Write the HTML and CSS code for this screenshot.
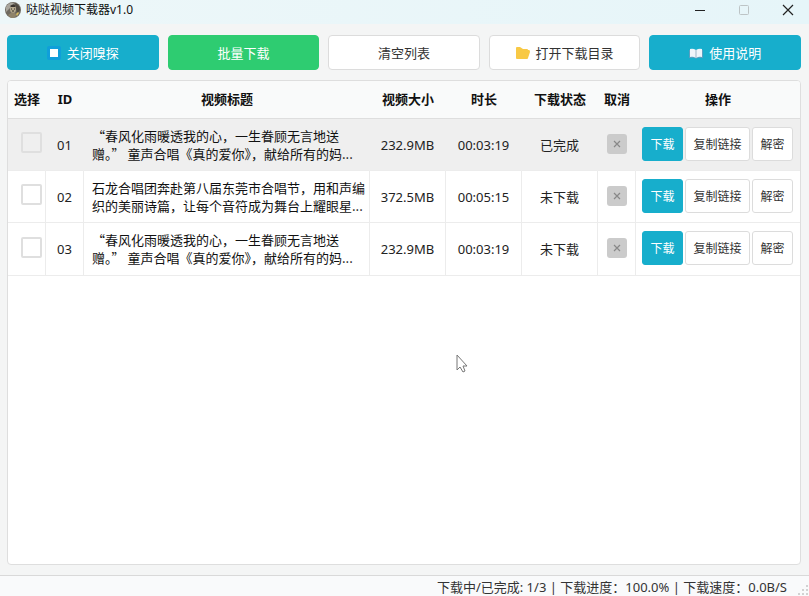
FILE: index.html
```html
<!DOCTYPE html>
<html lang="zh-CN">
<head>
    <meta charset="UTF-8">
    <title>哒哒视频下载器v1.0</title>
    <link rel="stylesheet" href="styles.css">
</head>
<body>
    <!-- Title bar -->
    <header class="titlebar">
        <svg class="app-icon" viewBox="0 0 16 16" width="16" height="16">
            <circle cx="8" cy="8" r="8" fill="#6f6a60"/>
            <path d="M1 5Q4 0 9 1L7 4 3 8 1 10z" fill="#a9a69d"/>
            <path d="M10 1Q15 3 15 8L12 12 11 6z" fill="#514c43"/>
            <ellipse cx="8" cy="7" rx="3" ry="4" fill="#b3a78c"/>
            <path d="M5 4Q8 1 11 4L10 5H6z" fill="#38342e"/>
            <path d="M6 7h1M9 7h1M7 9h2" stroke="#332e27"/>
            <path d="M3 13Q8 8 12 13L9 16H6z" fill="#8f836a"/>
            <path d="M11 12l2-2 1 1-2 3z" fill="#d7bd62"/>
        </svg>
        <h1>哒哒视频下载器v1.0</h1>
        <div class="window-buttons">
            <button type="button" aria-label="最小化"><svg width="12" height="12" viewBox="0 0 12 12"><path d="M1 6.5h10" stroke="#222"/></svg></button>
            <button type="button" aria-label="最大化" disabled><svg width="12" height="12" viewBox="0 0 12 12"><rect x="1.5" y="1.5" width="9" height="9" rx="1" fill="none" stroke="#bdc4c6"/></svg></button>
            <button type="button" aria-label="关闭"><svg width="12" height="12" viewBox="0 0 12 12"><path d="M1 1l10 10M11 1L1 11" stroke="#222" stroke-width="1.2"/></svg></button>
        </div>
    </header>

    <main>
        <!-- Toolbar -->
        <div class="toolbar">
            <button type="button" class="btn primary">
                <svg width="14" height="14" viewBox="0 0 14 14"><rect width="14" height="14" rx="2" fill="#109fda"/><rect x="3" y="3" width="8" height="8" fill="#fff"/></svg>
                关闭嗅探
            </button>
            <button type="button" class="btn success">批量下载</button>
            <button type="button" class="btn">清空列表</button>
            <button type="button" class="btn">
                <svg width="14" height="14" viewBox="0 0 14 14"><path d="M0 2Q0 1 1 1H4L7 3H11Q12 3 12 4H13Q14 4 14 6L12 12Q12 13 11 13H1Q0 13 0 12z" fill="#f8c945"/></svg>
                打开下载目录
            </button>
            <button type="button" class="btn primary">
                <svg width="14" height="14" viewBox="0 0 14 14"><path d="M0 4H1V11H6L7 12 8 11H13V4H14V12H8L7 13 6 12H0z" fill="#5a9fc0"/><path d="M1 3Q4 2 7 4 10 2 13 3V11Q10 10 7 12 4 10 1 11z" fill="#eef4fa"/><path d="M7 4V12" stroke="#9cb7c9"/></svg>
                使用说明
            </button>
        </div>

        <!-- Video list -->
        <div class="panel">
            <table>
                <colgroup>
                    <col class="col-s"><col class="col-s"><col>
                    <col class="col-m"><col class="col-m"><col class="col-m">
                    <col class="col-s"><col class="col-actions">
                </colgroup>
                <thead>
                    <tr><th>选择</th><th>ID</th><th>视频标题</th><th>视频大小</th><th>时长</th><th>下载状态</th><th>取消</th><th>操作</th></tr>
                </thead>
                <tbody>
                    <tr class="selected">
                        <td class="pick"><input type="checkbox" aria-label="选择 01"></td>
                        <td>01</td>
                        <td class="title">“春风化雨暖透我的心，一生眷顾无言地送<br>赠。” 童声合唱《真的爱你》，献给所有的妈...</td>
                        <td>232.9MB</td>
                        <td>00:03:19</td>
                        <td>已完成</td>
                        <td><button type="button" class="cancel" aria-label="取消 01"><svg width="8" height="8" viewBox="0 0 8 8"><path d="M1 1l6 6M7 1L1 7"/></svg></button></td>
                        <td><div class="actions"><button type="button" class="btn primary">下载</button><button type="button" class="btn">复制链接</button><button type="button" class="btn">解密</button></div></td>
                    </tr>
                    <tr>
                        <td class="pick"><input type="checkbox" aria-label="选择 02"></td>
                        <td>02</td>
                        <td class="title">石龙合唱团奔赴第八届东莞市合唱节，用和声编<br>织的美丽诗篇，让每个音符成为舞台上耀眼星...</td>
                        <td>372.5MB</td>
                        <td>00:05:15</td>
                        <td>未下载</td>
                        <td><button type="button" class="cancel" aria-label="取消 02"><svg width="8" height="8" viewBox="0 0 8 8"><path d="M1 1l6 6M7 1L1 7"/></svg></button></td>
                        <td><div class="actions"><button type="button" class="btn primary">下载</button><button type="button" class="btn">复制链接</button><button type="button" class="btn">解密</button></div></td>
                    </tr>
                    <tr>
                        <td class="pick"><input type="checkbox" aria-label="选择 03"></td>
                        <td>03</td>
                        <td class="title">“春风化雨暖透我的心，一生眷顾无言地送<br>赠。” 童声合唱《真的爱你》，献给所有的妈...</td>
                        <td>232.9MB</td>
                        <td>00:03:19</td>
                        <td>未下载</td>
                        <td><button type="button" class="cancel" aria-label="取消 03"><svg width="8" height="8" viewBox="0 0 8 8"><path d="M1 1l6 6M7 1L1 7"/></svg></button></td>
                        <td><div class="actions"><button type="button" class="btn primary">下载</button><button type="button" class="btn">复制链接</button><button type="button" class="btn">解密</button></div></td>
                    </tr>
                </tbody>
            </table>
        </div>
    </main>

    <!-- Status bar -->
    <footer class="statusbar">
        <span>下载中/已完成: 1/3 | 下载进度：100.0% | 下载速度：0.0B/S</span>
        <svg class="grip" width="12" height="12" viewBox="0 0 12 12"><path d="M9 1h2v2H9zM5 5h2v2H5zM9 5h2v2H9zM1 9h2v2H1zM5 9h2v2H5zM9 9h2v2H9z" fill="#d2d2d2"/></svg>
    </footer>

    <svg class="pointer" width="12" height="20" viewBox="0 0 12 20"><path d="M1 1V16L4 13 7 18 9 17 7 12H11z" fill="#fff" stroke="#777"/></svg>
</body>
</html>
```
FILE: styles.css
```css
* { box-sizing: border-box; }
body { display: flex; flex-direction: column; min-height: 100vh; margin: 0; background: #f4f5f5; color: #222; font: 13px/18px "Noto Sans", "Noto Sans CJK SC", sans-serif; }
button { font: inherit; color: inherit; cursor: pointer; }

/* title bar */
.titlebar { display: flex; align-items: center; gap: 5px; height: 24px; padding: 0 5px 4px; background: linear-gradient(90deg, #edf7f9, #e6f5f9); }
.titlebar h1 { margin: 0; font-size: 12px; font-weight: normal; color: #111; }
.window-buttons { display: flex; margin-left: auto; }
.window-buttons button { display: flex; justify-content: center; width: 44px; padding: 0; border: 0; background: none; }
.window-buttons button:last-child { margin-right: -6px; }

main { flex: 1; display: flex; flex-direction: column; gap: 10px; padding: 11px 8px 10px 7px; }

/* buttons */
.btn { display: flex; align-items: center; justify-content: center; gap: 6px; padding: 0 8px; border: 1px solid #dcdcdc; border-radius: 4px; background: #fff; color: #333; white-space: nowrap; }
.btn.primary { background: #17aecc; border-color: #17aecc; color: #fff; }
.btn.success { background: #2ecc71; border-color: #2ecc71; color: #fff; }
.toolbar { display: grid; grid-template-columns: repeat(5, 1fr); gap: 9px; }
.toolbar .btn { height: 35px; }

/* list */
.panel { flex: 1; border: 1px solid #dedede; border-radius: 4px; background: #fff; overflow: hidden; }
table { width: 100%; table-layout: fixed; border-collapse: separate; border-spacing: 0; }
.col-s { width: 38px; }
.col-m { width: 76px; }
.col-actions { width: 164px; }
th { height: 38px; padding: 0 0 2px; border-bottom: 1px solid #dedede; background: #f9fafa; color: #111; font-weight: bold; white-space: nowrap; }
td { height: 52px; padding: 0; border-right: 1px solid #ececec; border-bottom: 1px solid #ececec; text-align: center; }
td:last-child { border-right: 0; }
tbody tr:last-child td { height: 53px; }
.selected td { background: #efefef; border-right-color: #efefef; }
td.title { padding: 0 0 0 8px; font-family: "Noto Sans CJK SC", sans-serif; text-align: left; white-space: nowrap; color: #111; }
td.pick { padding-left: 10px; }
.pick input { appearance: none; display: block; width: 21px; height: 21px; margin: 0 auto 4px; border: 2px solid #dfdfdf; border-radius: 2px; }
.pick input:checked { background: #17aecc; }
.cancel { display: flex; align-items: center; justify-content: center; width: 20px; height: 20px; margin: 0 auto 2px; padding: 0; border: 0; border-radius: 3px; background: #cbcbcb; }
.cancel path { stroke: #888; stroke-width: 1.2; }
.actions { display: flex; gap: 2px; padding: 0 7px 2px 6px; }
.actions .btn { height: 34px; flex: 1 1 auto; padding: 2px 7px 0; border-radius: 3px; font-size: 12px; }

/* status bar */
.statusbar { display: flex; align-items: center; justify-content: flex-end; height: 21px; padding-top: 2px; gap: 10px; border-top: 1px solid #d9d9d9; background: #f9fafb; color: #333; }
.grip { align-self: flex-end; }

.pointer { position: absolute; left: 456px; top: 354px; pointer-events: none; }
```
